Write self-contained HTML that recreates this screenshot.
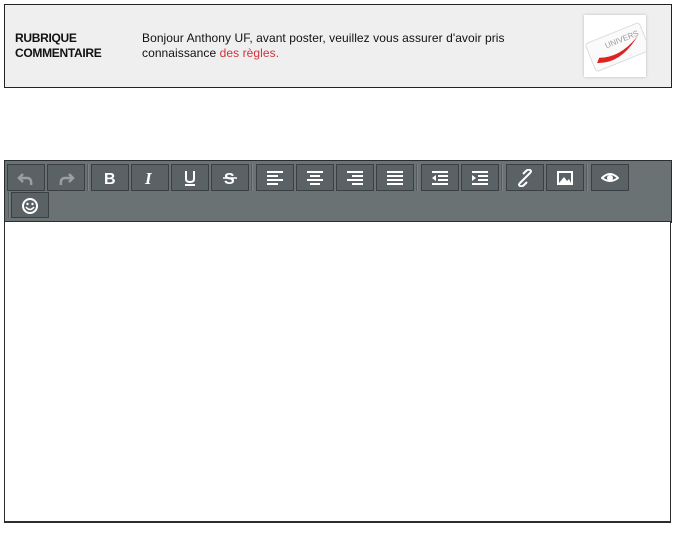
<!DOCTYPE html><html><head><meta charset="utf-8"><style>
body{margin:0;width:676px;height:533px;background:#fff;position:relative;font-family:"Liberation Sans",Arial,sans-serif;overflow:hidden}
.top{position:absolute;left:4px;top:4px;width:666px;height:82px;border:1px solid #222;background:#efefef}
.lab{position:absolute;left:10px;top:26px;font-size:12px;font-weight:bold;color:#111;line-height:15px;letter-spacing:-0.3px}
.msg{position:absolute;left:137px;top:26px;font-size:12px;color:#111;line-height:15px;letter-spacing:0.07px}
.msg span{color:#d0343a}
.logo{position:absolute;left:579px;top:10px;width:62px;height:62px;background:#fff;box-shadow:0 0 3px #bbb}
.tb{position:absolute;left:4px;top:160px;width:666px;height:60px;border:1px solid #2a2e30;border-bottom:2px solid #2a2e30;background:#6b7273}
.ed{position:absolute;left:4px;top:222px;width:665px;height:299px;border-left:1px solid #2a2e30;border-right:1px solid #2a2e30;border-bottom:2px solid #2a2e30;background:#fff}
.b{position:absolute;width:36px;height:25px;border:1px solid #3a3f42;background:#5b6266;top:164px}
.b svg{position:absolute;left:9px;top:4px}
.sep{position:absolute;top:164px;width:1px;height:27px;background:#555b5e;border-right:1px solid #7c8384}
</style></head><body>
<div class="top">
<div class="lab">RUBRIQUE<br>COMMENTAIRE</div>
<div class="msg">Bonjour Anthony UF, avant poster, veuillez vous assurer d'avoir pris<br>connaissance <span>des règles.</span></div>
<div class="logo"><svg width="62" height="62"><g transform="rotate(-22 31 31)"><rect x="4" y="18" width="58" height="30" rx="3" fill="#fafafa" stroke="#ddd"/><path d="M8 40 Q30 50 56 30 Q32 44 12 36Z" fill="#d22"/><text x="22" y="30" font-size="8" fill="#999" font-family="Liberation Sans">UNIVERS</text></g></svg></div>
</div>
<div class="tb"></div>
<div class="ed"></div>
<div class="b" style="left:7px"><svg width="18" height="18"><path d="M6 5 L2 9 L6 13 M2 9 H10 Q15 9 14 16" fill="none" stroke="#9aa0a2" stroke-width="2.5"/></svg></div>
<div class="b" style="left:47px"><svg width="18" height="18"><path d="M12 5 L16 9 L12 13 M16 9 H8 Q3 9 4 16" fill="none" stroke="#9aa0a2" stroke-width="2.5"/></svg></div>
<div class="sep" style="left:87px"></div>
<div class="b" style="left:91px"><svg width="18" height="18"><text x="3" y="15" font-size="16" font-weight="bold" fill="#fff" font-family="Liberation Sans">B</text></svg></div>
<div class="b" style="left:131px"><svg width="18" height="18"><text x="4" y="15" font-size="17" font-style="italic" font-weight="bold" fill="#fff" font-family="Liberation Serif">I</text></svg></div>
<div class="b" style="left:171px"><svg width="18" height="18"><path d="M5 2V10Q5 13 9 13Q13 13 13 10V2M4 16H14" fill="none" stroke="#fff" stroke-width="2"/></svg></div>
<div class="b" style="left:211px"><svg width="18" height="18"><text x="3" y="15" font-size="16" font-weight="bold" fill="#fff" font-family="Liberation Sans">S</text><path d="M2 9H16" stroke="#fff" stroke-width="1.5"/></svg></div>
<div class="sep" style="left:251px"></div>
<div class="b" style="left:256px"><svg width="18" height="18"><path d="M1 3H17M1 7H12M1 11H17M1 15H12" stroke="#fff" stroke-width="2"/></svg></div>
<div class="b" style="left:296px"><svg width="18" height="18"><path d="M1 3H17M4 7H14M1 11H17M4 15H14" stroke="#fff" stroke-width="2"/></svg></div>
<div class="b" style="left:336px"><svg width="18" height="18"><path d="M1 3H17M6 7H17M1 11H17M6 15H17" stroke="#fff" stroke-width="2"/></svg></div>
<div class="b" style="left:376px"><svg width="18" height="18"><path d="M1 3H17M1 7H17M1 11H17M1 15H17" stroke="#fff" stroke-width="2"/></svg></div>
<div class="sep" style="left:416px"></div>
<div class="b" style="left:421px"><svg width="18" height="18"><path d="M1 3H17M7 7H17M7 11H17M1 15H17" stroke="#fff" stroke-width="2"/><path d="M5 6L1 9L5 12Z" fill="#fff"/></svg></div>
<div class="b" style="left:461px"><svg width="18" height="18"><path d="M1 3H17M7 7H17M7 11H17M1 15H17" stroke="#fff" stroke-width="2"/><path d="M1 6L5 9L1 12Z" fill="#fff"/></svg></div>
<div class="sep" style="left:501px"></div>
<div class="b" style="left:506px"><svg width="18" height="18"><path d="M8 10L4 14Q2 16 4 17Q6 18 8 16L11 13M10 8L14 4Q16 2 14 1Q12 0 10 2L7 5M7 11L11 7" fill="none" stroke="#fff" stroke-width="2"/></svg></div>
<div class="b" style="left:546px"><svg width="18" height="18"><rect x="2" y="3" width="14" height="12" fill="none" stroke="#fff" stroke-width="2"/><path d="M3 14L8 8L11 12L13 10L15 14Z" fill="#fff"/></svg></div>
<div class="sep" style="left:586px"></div>
<div class="b" style="left:591px"><svg width="18" height="18"><path d="M1 9Q9 1 17 9Q9 15 1 9Z" fill="none" stroke="#fff" stroke-width="2"/><circle cx="9" cy="9" r="3" fill="#fff"/></svg></div>
<div class="sep" style="left:8px;top:192px;height:26px"></div>
<div class="b" style="left:11px;top:192px;height:24px"><svg width="18" height="18"><circle cx="9" cy="9" r="7" fill="none" stroke="#fff" stroke-width="2"/><circle cx="6.5" cy="7" r="1.2" fill="#fff"/><circle cx="11.5" cy="7" r="1.2" fill="#fff"/><path d="M5 10Q9 15 13 10" fill="none" stroke="#fff" stroke-width="1.6"/></svg></div>
</body></html>
